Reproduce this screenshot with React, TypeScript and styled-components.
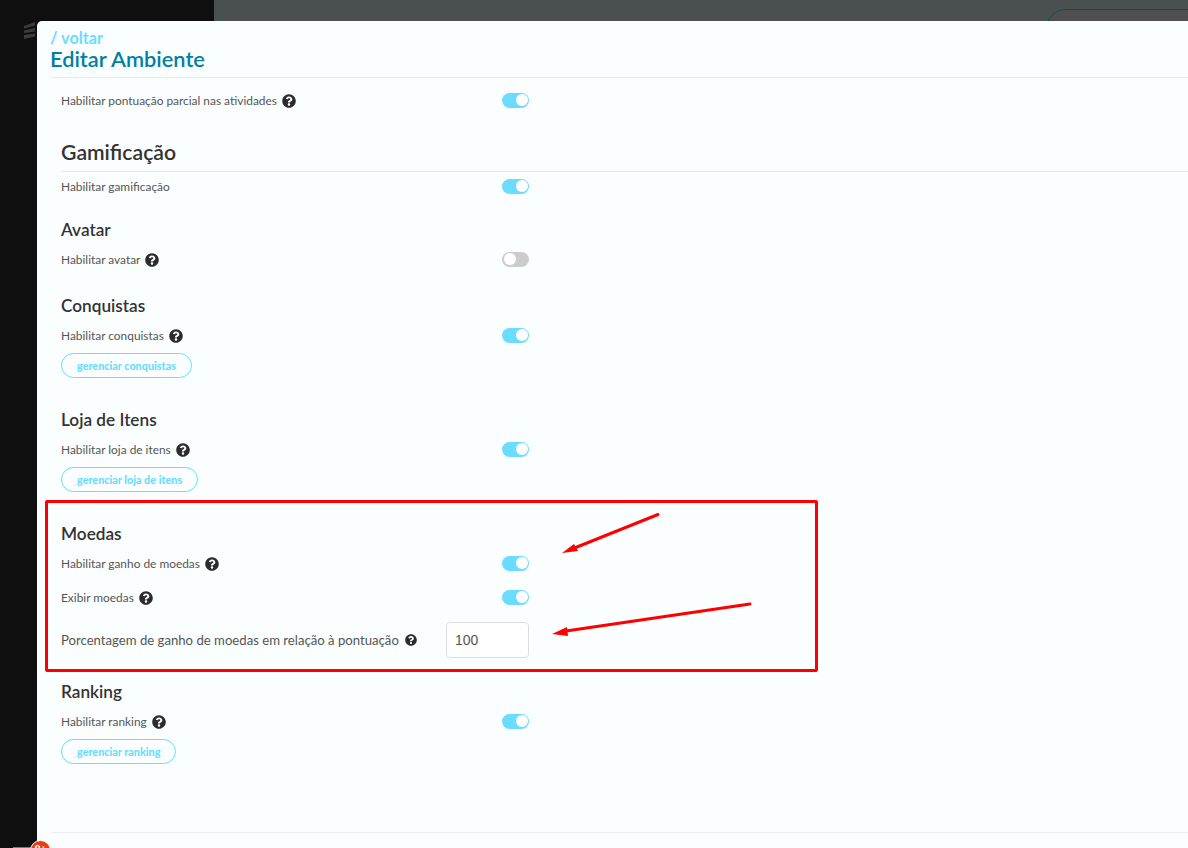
import React from 'react';
import styled, { createGlobalStyle } from 'styled-components';
import { FaQuestionCircle } from 'react-icons/fa';

const GlobalStyle = createGlobalStyle`
  html, body {
    margin: 0;
    height: 100%;
    overflow: hidden;
    background: #0f0f0f;
    font-family: "Lato", "Noto Sans", sans-serif;
  }
`;

const Page = styled.div`
  position: relative;
  display: flex;
  width: 1188px;
  height: 848px;
  overflow: hidden;
`;

const Sidebar = styled.aside`
  width: 214px;
  background: #0f0f0f;
  padding: 22px 0 0 24px;
  box-sizing: border-box;
`;

const Main = styled.main`
  position: relative;
  flex: 1;
  background: #4a4f4f;
`;

const BackPill = styled.div`
  position: absolute;
  left: 832px;
  top: 9px;
  width: 200px;
  height: 60px;
  border: 1px solid #164a52;
  border-radius: 20px;
  background: #4f4f4f;
`;

const Modal = styled.section`
  position: absolute;
  left: 37px;
  top: 21px;
  right: 0;
  bottom: 0;
  background: #fbfeff;
  border-top-left-radius: 5px;
  display: flex;
  flex-direction: column;
`;

const ModalHeader = styled.header`
  margin-left: 14px;
  height: 57px;
  box-sizing: border-box;
  padding-top: 8px;
  border-bottom: 1px solid #e8eaec;
`;

const BackLink = styled.a`
  display: block;
  margin-left: -1px;
  font-size: 16.2px;
  line-height: 17px;
  font-weight: 700;
  color: #6bdcff;
`;

const ModalTitle = styled.h1`
  margin: 1px 0 0 -1px;
  font-size: 21.8px;
  line-height: 24px;
  font-weight: 600;
  color: #00809f;
`;

const ModalBody = styled.div`
  flex: 1;
  padding: 5px 0 0 24px;
`;

const ModalFooter = styled.footer`
  margin-left: 14px;
  height: 15px;
  border-top: 1px solid #ecedf0;
`;

const GroupTitle = styled.h2`
  margin: 21px 0 0;
  height: 34px;
  box-sizing: border-box;
  border-bottom: 1px solid #e4e6e8;
  font-size: 21.2px;
  line-height: 29px;
  font-weight: 600;
  color: #333;
`;

const Section = styled.div`
  display: flex;
  flex-direction: column;
  align-items: flex-start;
  margin-bottom: 18px;
`;

const SectionTitle = styled.h3`
  margin: 0;
  font-size: 17.2px;
  line-height: 24px;
  font-weight: 600;
  color: #333;
`;

const Row = styled.div<{ $height?: number }>`
  display: flex;
  align-items: center;
  justify-content: space-between;
  width: 468px;
  height: ${({ $height }) => $height ?? 34}px;
`;

const InputRow = styled(Row)`
  margin: 8px 0 4px;
`;

const Label = styled.span`
  display: inline-flex;
  align-items: center;
  gap: 5px;
  font-size: 11.9px;
  color: #555;
`;

const InputLabel = styled(Label)`
  gap: 6px;
  font-size: 13.15px;

  svg {
    width: 12px;
    height: 12px;
    margin-top: 0;
  }
`;

const HelpIcon = styled(FaQuestionCircle)`
  width: 14px;
  height: 14px;
  margin-top: 2px;
  color: #2b2b2b;
`;

const Toggle = styled.span<{ $on: boolean }>`
  position: relative;
  width: 27px;
  height: 15px;
  border-radius: 8px;
  background: ${({ $on }) => ($on ? '#6bdcff' : '#cccccc')};

  &::after {
    content: '';
    position: absolute;
    top: 1.5px;
    ${({ $on }) => ($on ? 'right: 1.5px;' : 'left: 1.5px;')}
    width: 12px;
    height: 12px;
    border-radius: 50%;
    background: #ffffff;
  }
`;

const PillButton = styled.button`
  display: block;
  height: 25px;
  padding: 0 15px;
  margin: 1px 0 12px;
  border: 1px solid #6bdcff;
  border-radius: 13px;
  background: transparent;
  color: #6bdcff;
  font-family: inherit;
  font-size: 10.8px;
  font-weight: 900;
`;

const NumberInput = styled.input`
  width: 83px;
  height: 36px;
  box-sizing: border-box;
  padding: 0 8px;
  border: 1px solid #dddddd;
  border-radius: 4px;
  background: #ffffff;
  color: #555;
  font-family: "Liberation Sans", sans-serif;
  font-size: 14px;
`;

const Highlight = styled.div`
  position: absolute;
  left: 45px;
  top: 500px;
  width: 773px;
  height: 172px;
  box-sizing: border-box;
  border: 3px solid #ff0000;
  border-radius: 2px;
  pointer-events: none;
`;

const Arrows = styled.svg`
  position: absolute;
  left: 0;
  top: 0;
  pointer-events: none;
`;

const NotificationDock = styled.div`
  position: absolute;
  left: 13px;
  top: 847px;
  width: 20px;
  height: 1px;
  background: #0aa5c4;
`;

const Badge = styled.span`
  position: absolute;
  left: 30px;
  top: 840px;
  width: 19px;
  height: 19px;
  border: 1px solid #fff;
  border-radius: 50%;
  background: #e0401c;
  color: #fff;
  font-size: 10px;
  font-weight: 900;
  line-height: 15px;
  text-align: center;
`;

const Logo = () => (
  <svg width="12" height="17" viewBox="0 0 12 17" fill="#3c3c3c">
    <path d="M0 4 L11 0 V3.4 L0 6.4Z" />
    <path d="M0 8.4 L11 6 V9.4 L0 11Z" />
    <path d="M0 13 L11 11.6 V14.6 L0 17Z" />
  </svg>
);

const Help = () => <HelpIcon />;

export default function App() {
  return (
    <Page>
      <GlobalStyle />
      <Sidebar>
        <Logo />
      </Sidebar>
      <Main>
        <BackPill />
      </Main>

      <Modal>
        <ModalHeader>
          <BackLink>/ voltar</BackLink>
          <ModalTitle>Editar Ambiente</ModalTitle>
        </ModalHeader>

        <ModalBody>
          <Row>
            <Label>
              Habilitar pontuação parcial nas atividades <Help />
            </Label>
            <Toggle $on />
          </Row>

          <GroupTitle>Gamificação</GroupTitle>
          <Section>
            <Row $height={28}>
              <Label>Habilitar gamificação</Label>
              <Toggle $on />
            </Row>
          </Section>

          <Section>
            <SectionTitle>Avatar</SectionTitle>
            <Row>
              <Label>
                Habilitar avatar <Help />
              </Label>
              <Toggle $on={false} />
            </Row>
          </Section>

          <Section>
            <SectionTitle>Conquistas</SectionTitle>
            <Row>
              <Label>
                Habilitar conquistas <Help />
              </Label>
              <Toggle $on />
            </Row>
            <PillButton>gerenciar conquistas</PillButton>
          </Section>

          <Section>
            <SectionTitle>Loja de Itens</SectionTitle>
            <Row>
              <Label>
                Habilitar loja de itens <Help />
              </Label>
              <Toggle $on />
            </Row>
            <PillButton>gerenciar loja de itens</PillButton>
          </Section>

          <Section>
            <SectionTitle>Moedas</SectionTitle>
            <Row>
              <Label>
                Habilitar ganho de moedas <Help />
              </Label>
              <Toggle $on />
            </Row>
            <Row>
              <Label>
                Exibir moedas <Help />
              </Label>
              <Toggle $on />
            </Row>
            <InputRow $height={36}>
              <InputLabel>
                Porcentagem de ganho de moedas em relação à pontuação <Help />
              </InputLabel>
              <NumberInput defaultValue="100" />
            </InputRow>
          </Section>

          <Section>
            <SectionTitle>Ranking</SectionTitle>
            <Row>
              <Label>
                Habilitar ranking <Help />
              </Label>
              <Toggle $on />
            </Row>
            <PillButton>gerenciar ranking</PillButton>
          </Section>
        </ModalBody>

        <ModalFooter />
      </Modal>

      <Highlight />
      <Arrows width="1188" height="848" viewBox="0 0 1188 848">
        <path d="M658 514.5 L572 549" stroke="#ff0000" strokeWidth="3" strokeLinecap="round" fill="none" />
        <path d="M562 553 L574 544 L578 551Z" fill="#ff0000" />
        <path d="M750 604 L566 631" stroke="#ff0000" strokeWidth="3" strokeLinecap="round" fill="none" />
        <path d="M552 634 L567 627 L568 636Z" fill="#ff0000" />
      </Arrows>

      <NotificationDock />
      <Badge>9+</Badge>
    </Page>
  );
}
